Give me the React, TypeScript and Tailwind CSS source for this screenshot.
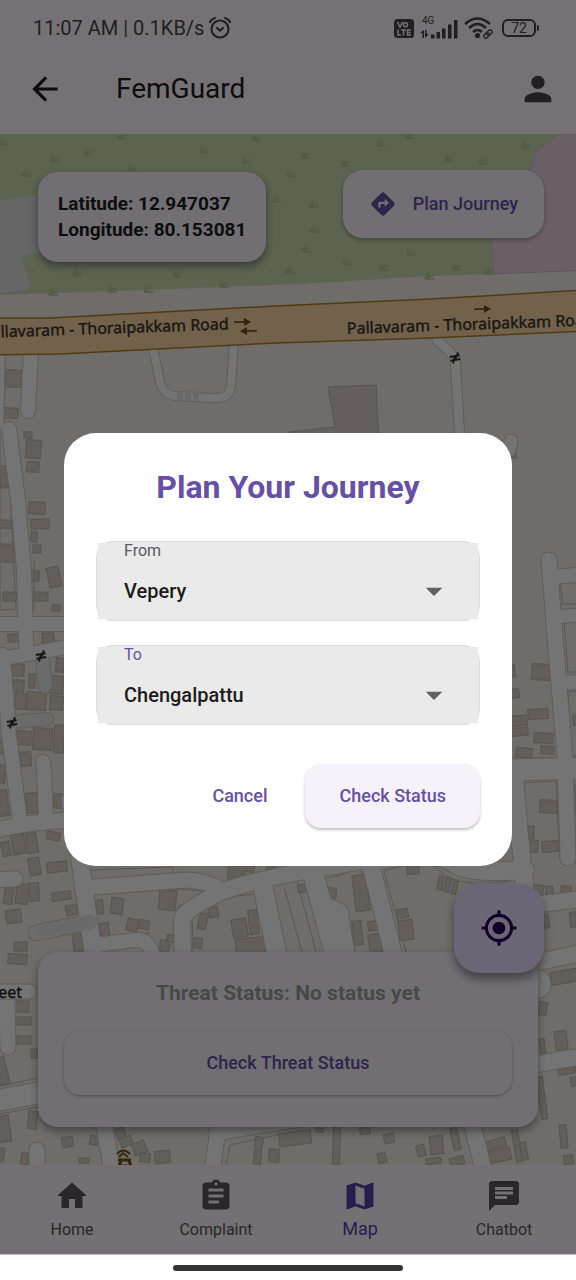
import { useState, type ReactNode } from "react";
import {
  MdArrowBack,
  MdArrowDropDown,
  MdAssignment,
  MdChat,
  MdDirections,
  MdHome,
  MdMap,
  MdMyLocation,
  MdPerson,
} from "react-icons/md";

type Road = { d: string; w: number; tone?: "plain" | "path" };
type Building = [x: number, y: number, w: number, h: number, turn: number];

const roads: Road[] = [
  { d: "M31 350 L28 411", w: 14 },
  { d: "M-1 350 L-2 424", w: 11 },
  { d: "M9 429 L18 500 L24 570 L26 640 L27 652", w: 14 },
  { d: "M-10 624 L90 624", w: 14 },
  { d: "M-10 660 Q30 655 90 642", w: 14 },
  { d: "M3 655 L9 735 L20 822", w: 14 },
  { d: "M43 762 L44 770 L46 820", w: 14 },
  { d: "M-10 832 Q30 820 90 820", w: 15 },
  { d: "M-10 880 L15 879", w: 15 },
  { d: "M70 800 L80 860 L95 965", w: 17 },
  { d: "M82 888 L185 880 Q206 880 222 890", w: 15 },
  { d: "M183 965 L182 920 Q182 912 215 895 Q240 883 300 872 L380 858", w: 16 },
  { d: "M95 945 L135 940 Q152 938 155 965", w: 14 },
  { d: "M262 882 L279 965", w: 19 },
  { d: "M312 870 L338 965", w: 20 },
  { d: "M325 905 L340 912 L348 965", w: 16 },
  { d: "M370 862 L396 965", w: 17 },
  { d: "M380 860 Q440 850 455 864 Q470 874 525 870", w: 18 },
  { d: "M514 770 L519 830 L525 890", w: 17 },
  { d: "M511 441 L509 450", w: 13 },
  { d: "M549 560 L556 650 L565 757 L568 858", w: 15 },
  { d: "M552 577 L590 574", w: 14 },
  { d: "M555 617 L590 614", w: 13 },
  { d: "M560 683 L590 681", w: 14 },
  { d: "M505 770 L590 768", w: 21 },
  { d: "M525 906 L590 898", w: 16 },
  { d: "M525 965 L590 951", w: 16 },
  { d: "M535 984 L536 984", w: 29 },
  { d: "M520 1067 L590 1055", w: 16 },
  { d: "M7 1000 L8 1047", w: 15 },
  { d: "M-10 1102 L60 1089", w: 21 },
  { d: "M37 1180 L37 1150", w: 15 },
  { d: "M102 1115 L114 1180", w: 16 },
  { d: "M220 1115 L211 1180", w: 15 },
  { d: "M215 1134 L300 1120", w: 13 },
  { d: "M470 1115 L486 1180", w: 16 },
  { d: "M153 347 L160 382 Q164 396 176 396 L214 398 Q230 399 231 386 L234 342", w: 8 },
  { d: "M437 340 L449 351 L455 358 L460 440", w: 9 },
  { d: "M43 662 L45 686", w: 13, tone: "path" },
  { d: "M14 722 L47 719", w: 12, tone: "path" },
  { d: "M36 933 L90 922", w: 15, tone: "path" },
];

const buildings: Building[] = [
  [6, 370, 15, 17, 2], [4, 408, 14, 10, 3],
  [24, 432, 8, 6, 2], [26, 440, 15, 18, 4], [27, 462, 12, 10, 4],
  [29, 502, 16, 12, 3], [31, 519, 18, 10, -3], [31, 532, 6, 10, 3], [33, 545, 8, 8, 3],
  [0, 466, 8, 22, -3], [-3, 520, 15, 8, 2], [-2, 544, 16, 18, 2], [3, 592, 14, 9, 2],
  [33, 571, 6, 10, 2], [48, 567, 12, 20, -12], [34, 592, 14, 9, 2], [52, 605, 8, 6, 4],
  [8, 634, 10, 8, -5], [42, 633, 12, 11, -3], [56, 658, 8, 14, 4],
  [11, 664, 13, 12, 4], [13, 680, 11, 12, 4], [15, 694, 11, 15, 4], [27, 692, 19, 18, 3],
  [29, 674, 6, 14, 2], [50, 676, 13, 18, 4], [50, 696, 13, 14, 4],
  [17, 731, 14, 14, 4], [33, 728, 19, 22, 3], [54, 725, 10, 28, 3], [20, 752, 11, 14, -4],
  [26, 793, 13, 20, -5], [54, 794, 11, 14, 4], [-2, 790, 10, 26, -8],
  [-3, 738, 7, 16, 3], [-3, 765, 8, 18, 3],
  [2, 842, 8, 14, -12], [12, 834, 13, 20, -10], [27, 833, 10, 20, -10],
  [29, 858, 11, 17, -10], [47, 862, 20, 10, -6], [47, 832, 13, 8, 12],
  [4, 888, 9, 16, 8], [16, 884, 12, 20, 6], [29, 883, 10, 18, -4],
  [52, 892, 19, 8, -8], [6, 910, 15, 13, -8], [66, 905, 12, 10, -12],
  [14, 942, 13, 9, 0], [8, 954, 19, 10, 4], [73, 932, 9, 20, -7],
  [96, 900, 7, 14, -6], [111, 898, 12, 16, 8], [100, 923, 9, 13, -8],
  [127, 919, 11, 12, 14], [139, 920, 10, 9, 14], [159, 890, 17, 20, 6],
  [160, 940, 9, 12, 4], [167, 935, 9, 7, 2], [194, 938, 8, 10, 6],
  [199, 913, 8, 16, 12], [209, 907, 9, 10, -10], [228, 866, 17, 14, 5],
  [247, 866, 7, 6, 8], [267, 866, 8, 5, 5], [232, 919, 15, 18, -9],
  [249, 910, 9, 24, -7], [236, 938, 30, 18, -6],
  [298, 884, 11, 8, -9], [328, 888, 8, 10, 3], [354, 875, 14, 36, -7],
  [353, 921, 9, 24, -6], [368, 921, 12, 9, -10], [369, 934, 15, 18, -8],
  [397, 909, 11, 9, -10], [399, 920, 14, 20, -6], [407, 867, 12, 7, -5],
  [438, 876, 5, 14, 10], [445, 878, 5, 14, 14], [452, 881, 5, 13, 14],
  [512, 449, 4, 9, 0], [507, 665, 8, 12, -6], [511, 689, 8, 9, -10],
  [532, 664, 18, 16, 4], [528, 709, 20, 10, -4], [507, 716, 20, 10, -6],
  [507, 728, 21, 8, -5], [534, 733, 19, 10, 4], [541, 746, 13, 8, 4],
  [516, 748, 16, 9, 6], [540, 800, 17, 13, 3], [522, 826, 12, 12, 4],
  [524, 840, 14, 12, 4], [542, 841, 16, 11, -5], [533, 885, 10, 12, 8],
  [546, 886, 7, 11, -7], [561, 886, 10, 8, 6], [543, 915, 6, 13, -8],
  [570, 912, 10, 15, -6], [573, 785, 9, 28, 0], [573, 715, 8, 10, -5],
  [551, 970, 30, 13, -9], [539, 1002, 8, 13, 10], [555, 1031, 12, 19, -7],
  [540, 1039, 5, 14, -8], [558, 1068, 18, 6, -9], [539, 1077, 6, 42, -8],
  [571, 1077, 8, 9, -7], [560, 1125, 7, 23, -5], [564, 1155, 9, 9, -6],
  [17, 1001, 12, 11, 3], [17, 1017, 14, 8, 0], [17, 1036, 14, 8, 0],
  [31, 1049, 7, 9, -4], [-3, 1057, 10, 28, -14], [-2, 1116, 12, 26, -8],
  [28, 1111, 9, 18, 5], [-2, 1148, 6, 13, 10], [21, 1153, 8, 11, 12],
  [62, 1137, 11, 10, -9], [90, 1136, 8, 9, 12], [79, 1158, 10, 5, 0],
  [116, 1128, 9, 10, -20], [120, 1137, 12, 9, -20], [133, 1142, 13, 12, -22],
  [140, 1153, 10, 9, 8], [155, 1151, 15, 12, -6], [255, 1137, 8, 10, 10],
  [254, 1149, 7, 15, 5], [269, 1149, 10, 13, 5], [279, 1132, 32, 13, -7],
  [316, 1128, 7, 4, 4], [333, 1128, 7, 36, 2], [360, 1127, 10, 7, -7],
  [384, 1134, 10, 9, -12], [378, 1153, 8, 10, -15], [417, 1145, 8, 11, -16],
  [430, 1136, 13, 18, -5], [452, 1128, 7, 22, -12], [426, 1158, 15, 6, -8],
  [450, 1157, 14, 8, -14], [482, 1140, 24, 9, -16], [484, 1150, 27, 12, -12],
  [514, 1130, 6, 32, -9], [521, 1142, 6, 18, -9],
];

const parcels = [
  "M0 434 L7 436 L16 609 L0 610Z",
  "M34 610 L34 560 M40 666 L44 695",
  "M88 870 L173 867 L173 874 L90 880Z",
  "M93 895 L176 889 L205 891 L178 907 L175 939 L165 955 M93 895 L99 938 L150 933",
  "M192 916 Q220 895 256 894 L266 952 M192 916 L193 952",
  "M271 890 L286 952 M284 887 L302 952 M297 881 L316 952",
  "M325 879 L354 952 M325 879 L360 869 L387 952",
  "M384 871 L410 864 L435 866 Q453 890 510 881 M384 871 L406 952",
  "M560 581 L585 579 L585 604 L563 604Z",
  "M564 620 L584 618 L585 672 L568 672Z",
  "M568 692 L584 690 M568 692 L572 756 L584 756",
  "M513 758 L556 758 M519 783 L556 781 L560 861 M519 783 L528 880",
  "M0 1086 L38 1078 M0 1114 L38 1107 M230 1145 L226 1165 M230 1145 L300 1130",
];

const scrub: [number, number][] = [
  [3, 142], [55, 159], [88, 152], [122, 136], [204, 150], [246, 160], [257, 138],
  [27, 173], [132, 169], [291, 174], [277, 199], [77, 273], [177, 274],
  [112, 289], [148, 289], [53, 292], [223, 284], [381, 143], [410, 135], [306, 155],
  [346, 163], [449, 158], [483, 161], [526, 145], [314, 204], [315, 229],
  [306, 249], [290, 270], [347, 262], [383, 267], [411, 252], [456, 267], [489, 271],
  [429, 276],
];

function RoadLine({ d, w, tone }: Road) {
  return (
    <path
      d={d}
      fill="none"
      stroke={tone === "path" ? "#e9e9ea" : "#fdfdfd"}
      strokeWidth={w}
      strokeLinecap="round"
      strokeLinejoin="round"
    />
  );
}

function Arrow({ x, y, flip }: { x: number; y: number; flip?: boolean }) {
  return (
    <g transform={`translate(${x} ${y}) rotate(${flip ? 178 : -2})`}>
      <path d="M-8 0 H5" stroke="#73461a" strokeWidth="1.6" />
      <path d="M2 -4 L9 0 L2 4Z" fill="#73461a" />
    </g>
  );
}

function Gate({ x, y }: { x: number; y: number }) {
  return (
    <path
      transform={`translate(${x} ${y}) rotate(-10)`}
      d="M-5 -2 H5 M-5 2 H5 M-3 5 L0 -1 M0 1 L4 -5"
      stroke="#333"
      strokeWidth="2"
      fill="none"
    />
  );
}

function StreetMap() {
  return (
    <svg
      className="absolute inset-0 h-full w-full"
      viewBox="0 134 576 1031"
      preserveAspectRatio="xMidYMid slice"
      role="img"
      aria-label="Street map"
    >
      <rect x="-600" y="134" width="1776" height="1031" fill="#f0ede6" />
      <path d="M-10 134 H586 V271 L430 276 L300 284 L120 291 L-10 295Z" fill="#c9d8ae" />
      <path d="M-10 201 L2 200 L45 193 L60 250 L22 256 L31 286 L24 291 L-10 295Z" fill="#dedede" stroke="#cfcfcf" />
      <path d="M560 134 L536 152 L530 172 L480 200 L491 238 L494 274 L586 270 V134Z" fill="#e6d0df" stroke="#d6bdcf" />
      {scrub.map(([x, y], i) => (
        <path
          key={i}
          transform={`translate(${x} ${y})`}
          d="M-4 3 L-3 -2 M-4 3 L4 -1 M-4 3 H5 M-1 2 L-1 -4"
          fill="none"
          stroke="#b3c498"
          strokeWidth="1.4"
        />
      ))}
      <path d="M328 387 L376 385 L379 440 H285 L289 432 L335 427Z" fill="#d9d0c9" stroke="#c2b5aa" />
      {parcels.map((d) => (
        <path key={d} d={d} fill="none" stroke="#c2beb6" strokeWidth="1" />
      ))}
      {buildings.map(([x, y, w, h, turn], i) => (
        <rect
          key={i}
          x={x}
          y={y}
          width={w}
          height={h}
          transform={`rotate(${turn} ${x + w / 2} ${y + h / 2})`}
          fill="#d7cec4"
          stroke="#c3b8ab"
          strokeWidth="1.2"
        />
      ))}
      {roads.map((r) => (
        <path
          key={r.d}
          d={r.d}
          fill="none"
          stroke="#cccac6"
          strokeWidth={r.w + 2}
          strokeLinecap="round"
          strokeLinejoin="round"
        />
      ))}
      {roads.map((r) => (
        <RoadLine key={r.d} {...r} />
      ))}
      <path d="M177 396 H201" stroke="#e4e4e8" strokeWidth="9" strokeDasharray="6 2" />
      <path d="M38 932 L88 922" stroke="#dadada" strokeWidth="9" strokeDasharray="1 3" />
      <path
        d="M-10 318 L50 318 L276 306 L430 299 L586 290 V331 L430 338 L276 343 L60 354 L-10 355Z"
        fill="#fbd5a3"
        stroke="#b07e2c"
        strokeWidth="1.5"
      />
      <Arrow x={242} y={322} />
      <Arrow x={249} y={331} flip />
      <Arrow x={482} y={309} />
      <Gate x={455} y={358} />
      <Gate x={41} y={656} />
      <Gate x={12} y={723} />
      <g
        fill="#3a332b"
        stroke="#3a332b"
        strokeWidth="0.4"
        fontSize="16"
        fontFamily="'Noto Sans', 'Open Sans', sans-serif"
      >
        <text transform="translate(-18 338) rotate(-2)">Pallavaram - Thoraipakkam Road</text>
        <text transform="translate(347 334) rotate(-2)">Pallavaram - Thoraipakkam Road</text>
      </g>
      <rect x="-20" y="984" width="56" height="15" rx="6" fill="#fff" stroke="#c4c2be" />
      <text x="22" y="998" textAnchor="end" fontSize="16" fontFamily="'Noto Sans', sans-serif" fill="#222" stroke="#222" strokeWidth="0.3">
        Street
      </text>
      <g fill="none" stroke="#76531a" strokeWidth="2">
        <path d="M117 1154 Q123 1147 130 1154 M119 1157 L123 1153 L128 1157" />
        <path d="M118 1160 H131 M121 1161 L119 1166 H131 L129 1161" strokeWidth="3" />
      </g>
    </svg>
  );
}

function StatusBar() {
  return (
    <div className="flex h-14 items-center justify-between pr-[37px] pl-[33px] text-[#48454a]">
      <div className="flex items-center gap-1 text-xl">
        <span>11:07 AM | 0.1KB/s</span>
        <svg className="size-6" viewBox="0 0 24 24" fill="none" stroke="currentColor" strokeWidth="2.2" strokeLinecap="round">
          <circle cx="12" cy="13" r="8.5" />
          <path d="M9 12 L12 14.5 L15 12 M2 6 Q3.5 3 7 2 M22 6 Q20.500 3 17 2" />
        </svg>
      </div>
      <div className="flex items-center">
        <svg className="h-5 w-5" viewBox="0 0 20 20">
          <rect x="0" y="1" width="20" height="19" rx="3.500" fill="currentColor" />
          <g stroke="#fef7ff" strokeWidth="1.500" fill="none">
            <path d="M3.500 4 L6 9 L8.500 4" />
            <circle cx="11.500" cy="6.800" r="2" />
            <path d="M4 11.500 V17 H7 M7 12 H12 M9.500 12 V17.500 M17 12 H13.500 V17 H17 M13.500 14.500 H16.500" />
          </g>
        </svg>
        <svg className="ml-1.5 h-6 w-[38px]" viewBox="0 0 38 24" fill="currentColor">
          <text x="2" y="8" fontSize="10" fontFamily="Roboto, sans-serif">4G</text>
          <path d="M2.500 22 V17 H0 L4 14 V22Z M5 14 V22 L9 18 H6.500 V14Z" />
          <path d="M11 18.500 h3.500 v4 h-3.500Z M16.500 16 h3.500 v6.500 h-3.500Z M22 12.500 h3.500 v10 h-3.500Z M28 8.500 h3.500 v14 h-3.500Z M34 4 h3.500 v18.500 h-3.500Z" />
        </svg>
        <svg className="ml-1.5 h-6 w-8" viewBox="0 0 32 24" fill="none" stroke="currentColor" strokeWidth="2.600">
          <path d="M1 8 Q13.500 -3 26 8 M5 12 Q13.500 4 22 12 M9 16 Q13.500 12 18 16" />
          <circle cx="13.500" cy="19.500" r="1.300" fill="currentColor" />
          <g strokeWidth="1.300" transform="rotate(-45 24 18)">
            <rect x="19" y="16" width="6" height="4" rx="2" />
            <rect x="23" y="16" width="6" height="4" rx="2" />
          </g>
        </svg>
        <div className="ml-1.5 flex items-center gap-px">
          <span className="flex h-[18px] w-[34px] items-center justify-center rounded-md border-2 border-current text-sm">72</span>
          <span className="h-1.5 w-0.5 rounded-r bg-current" />
        </div>
      </div>
    </div>
  );
}

function PlaceSelect({
  id,
  label,
  value,
  options,
  active,
  onChange,
}: {
  id: string;
  label: string;
  value: string;
  options: string[];
  active?: boolean;
  onChange: (value: string) => void;
}) {
  return (
    <div className="rounded-2xl border border-[#dcdcdc] bg-[#eaeaea] p-px">
      <div className="relative bg-[#eaeaea]">
        <label
          htmlFor={id}
          className={
            active
              ? "block pl-[26px] text-base leading-4 text-[#6750a4]"
              : "block pl-[26px] text-base leading-4 text-[#5b5860]"
          }
        >
          {label}
        </label>
        <select
          id={id}
          value={value}
          onChange={(e) => onChange(e.target.value)}
          className="block h-[60px] w-full appearance-none bg-transparent pt-1 pr-16 pl-[26px] text-xl font-medium text-[#1d1b20] outline-none"
        >
          {options.map((o) => (
            <option key={o}>{o}</option>
          ))}
        </select>
        <MdArrowDropDown className="pointer-events-none absolute right-6 bottom-2 size-10 text-[#616161]" />
      </div>
    </div>
  );
}

function NavItem({ icon, label, active }: { icon: ReactNode; label: string; active?: boolean }) {
  return (
    <a
      href="#"
      aria-current={active ? "page" : undefined}
      className={
        active
          ? "flex flex-1 flex-col items-center gap-[3px] text-lg leading-6 text-[#5c3fa8]"
          : "flex flex-1 flex-col items-center gap-1 text-base leading-6 text-[#5b555e]"
      }
    >
      <span className="text-4xl">{icon}</span>
      {label}
    </a>
  );
}

function JourneyDialog() {
  const [from, setFrom] = useState("Vepery");
  const [to, setTo] = useState("Chengalpattu");
  return (
    <div className="absolute inset-0 flex items-center bg-black/54 px-16 pt-11">
      <section
        role="dialog"
        aria-labelledby="journey-title"
        className="w-full rounded-[32px] bg-white px-8 pt-[34px] pb-[38px]"
      >
        <h2 id="journey-title" className="text-center text-[32px] leading-10 font-bold text-[#6750a4]">
          Plan Your Journey
        </h2>
        <div className="mt-[34px] flex flex-col gap-6">
          <PlaceSelect id="from" label="From" value={from} options={["Vepery", "Adyar"]} onChange={setFrom} />
          <PlaceSelect id="to" label="To" value={to} options={["Chengalpattu", "Tambaram"]} onChange={setTo} active />
        </div>
        <div className="mt-[39px] flex items-center justify-end gap-[18px] text-lg font-medium text-[#6750a4]">
          <button type="button" className="px-5 py-4">Cancel</button>
          <button type="button" className="h-16 rounded-2xl bg-[#f7f2fa] px-[34px] shadow-[0_2px_3px_rgba(0,0,0,0.25)]">
            Check Status
          </button>
        </div>
      </section>
    </div>
  );
}

export default function App() {
  return (
    <div className="flex min-h-screen flex-col bg-white font-['Roboto',sans-serif]">
      <div className="relative flex flex-1 flex-col border-b border-[#bdbdbd]">
        <header className="bg-[#fef7ff]">
          <StatusBar />
          <div className="flex h-[78px] items-center px-[26px] pb-3">
            <button type="button" aria-label="Back" className="text-[#1d1b20]">
              <MdArrowBack className="size-[38px]" />
            </button>
            <h1 className="ml-[52px] flex-1 text-[28px] text-[#1d1b20]">FemGuard</h1>
            <button type="button" aria-label="Profile" className="-mr-2 text-[#49454f]">
              <MdPerson className="size-10" />
            </button>
          </div>
        </header>

        <main className="relative flex flex-1 flex-col justify-between pt-9 pr-8 pb-[38px] pl-[38px]">
          <StreetMap />
          <div className="relative flex items-start justify-between">
            <div className="mt-0.5 rounded-[20px] bg-[#f7f2fa] px-5 py-[19px] text-[19px] leading-[26px] font-bold text-[#1d1b20] shadow-[0_4px_9px_rgba(0,0,0,0.4)]">
              <p>Latitude: 12.947037</p>
              <p>Longitude: 80.153081</p>
            </div>
            <button
              type="button"
              className="flex h-[68px] items-center gap-4 rounded-[20px] bg-[#f7f2fa] px-[26px] text-lg font-medium text-[#6750a4] shadow-[0_2px_4px_rgba(0,0,0,0.3)]"
            >
              <MdDirections className="size-7" />
              Plan Journey
            </button>
          </div>
          <div className="relative mr-1.5 rounded-[20px] bg-[#f7f2fa] px-[26px] pt-[27px] pb-8 text-center shadow-[0_4px_9px_rgba(0,0,0,0.4)]">
            <p className="text-[21px] leading-7 font-bold text-[#9e9e9e]">Threat Status: No status yet</p>
            <button
              type="button"
              className="mt-6 h-16 w-full rounded-2xl bg-[#f7f2fa] text-lg font-medium text-[#6750a4] shadow-[0_1px_3px_rgba(0,0,0,0.3)]"
            >
              Check Threat Status
            </button>
            <button
              type="button"
              aria-label="My location"
              className="absolute -top-[69px] -right-1.5 flex size-[90px] items-center justify-center rounded-[26px] bg-[#eaddff] text-[#21005d] shadow-[0_6px_10px_rgba(0,0,0,0.4)]"
            >
              <MdMyLocation className="size-[38px]" />
            </button>
          </div>
        </main>

        <nav className="flex h-[89px] bg-[#fdf4fd] pt-[13px]">
          <NavItem icon={<MdHome />} label="Home" />
          <NavItem icon={<MdAssignment />} label="Complaint" />
          <NavItem icon={<MdMap />} label="Map" active />
          <NavItem icon={<MdChat />} label="Chatbot" />
        </nav>

        <JourneyDialog />
      </div>
      <div className="flex h-[25px] items-center justify-center">
        <span className="h-1.5 w-2/5 rounded-full bg-[#363636]" />
      </div>
    </div>
  );
}
